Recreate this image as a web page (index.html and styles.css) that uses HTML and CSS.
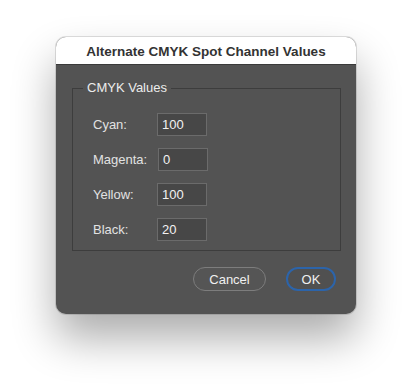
FILE: index.html
```html
<!DOCTYPE html>
<html>
<head>
<meta charset="utf-8">
<link rel="stylesheet" href="styles.css">
</head>
<body>
<div class="dialog">
  <div class="titlebar">Alternate CMYK Spot Channel Values</div>
  <div class="content">
    <fieldset class="group">
      <legend class="legend">CMYK Values</legend>
      <div class="row"><span class="label">Cyan:</span><span class="field">100</span></div>
      <div class="row"><span class="label">Magenta:</span><span class="field shift">0</span></div>
      <div class="row"><span class="label">Yellow:</span><span class="field">100</span></div>
      <div class="row"><span class="label">Black:</span><span class="field">20</span></div>
    </fieldset>
    <div class="buttons">
      <span class="btn cancel">Cancel</span>
      <span class="btn ok">OK</span>
    </div>
  </div>
</div>
</body>
</html>
```

FILE: styles.css
```css
html, body {
  margin: 0;
  padding: 0;
  background: #ffffff;
}
body {
  width: 412px;
  height: 388px;
  overflow: hidden;
  font-family: "Liberation Sans", Arial, sans-serif;
}
.dialog {
  margin-left: 56px;
  margin-top: 37px;
  width: 300px;
  height: 277px;
  border-radius: 10px;
  overflow: hidden;
  background: #535353;
  box-shadow: 0 24px 44px rgba(0,0,0,0.33), 0 0 0 1px rgba(0,0,0,0.12);
  display: flex;
  flex-direction: column;
}
.titlebar {
  height: 28px;
  background: #ffffff;
  color: #333333;
  font-weight: bold;
  font-size: 13.5px;
  display: flex;
  align-items: center;
  justify-content: center;
  border-bottom: 1px solid #3a3a3a;
  box-sizing: border-box;
  padding-top: 2px;
}
.content {
  padding: 16px 15px 0 16px;
  display: flex;
  flex-direction: column;
}
.group {
  margin: 0;
  border: 1px solid #3d3d3d;
  padding: 18px 0 15px 20px;
  height: 170px;
  box-sizing: border-box;
  display: flex;
  flex-direction: column;
  gap: 12px;
}
.legend {
  color: #ececec;
  font-size: 13px;
  padding: 0 4px;
  margin-left: -10px;
  line-height: 14px;
}
.row {
  display: flex;
  align-items: center;
  height: 23px;
}
.label {
  color: #e2e2e2;
  font-size: 13px;
  width: 64px;
}
.field {
  width: 50px;
  height: 23px;
  box-sizing: border-box;
  border: 1px solid #6b6b6b;
  background: #474747;
  color: #f2f2f2;
  font-size: 13px;
  padding-left: 4px;
  display: flex;
  align-items: center;
}
.field.shift {
  margin-left: 1px;
}
.buttons {
  display: flex;
  justify-content: flex-end;
  gap: 20px;
  margin-top: 16px;
  padding-right: 5px;
}
.btn {
  height: 24px;
  box-sizing: border-box;
  border-radius: 12px;
  color: #f0f0f0;
  font-size: 13px;
  display: flex;
  align-items: center;
  justify-content: center;
}
.cancel {
  width: 73px;
  border: 1px solid #7d7d7d;
  background: #555555;
}
.ok {
  width: 50px;
  border: 2px solid #2c64aa;
  background: #505050;
}
```
